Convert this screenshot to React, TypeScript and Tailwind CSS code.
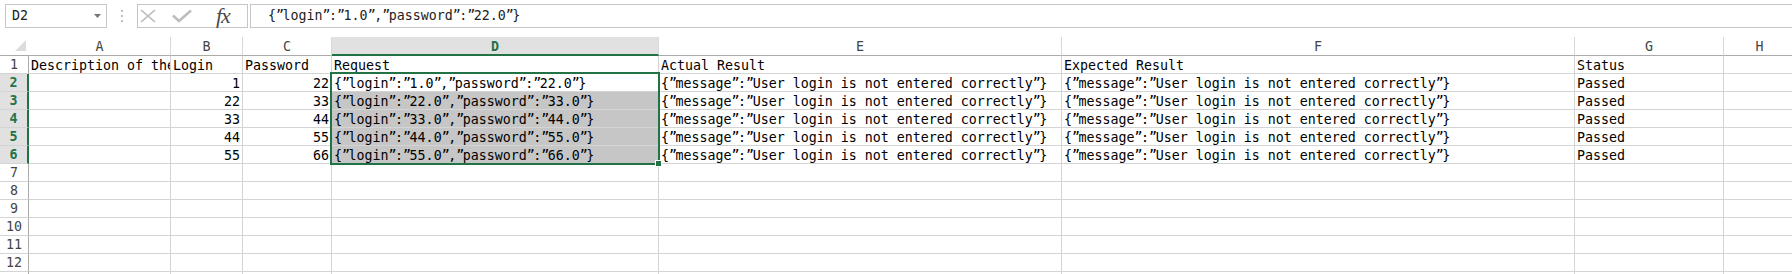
import React, { Fragment } from "react";

const COLW = [
  "w-[142px]",
  "w-[72px]",
  "w-[89px]",
  "w-[327px]",
  "w-[403px]",
  "w-[513px]",
  "w-[149px]",
  "w-[72px]",
];
const LETTERS = ["A", "B", "C", "D", "E", "F", "G", "H"];

function Q({ s }: { s: string }) {
  const parts = s.split("”");
  return (
    <>
      {parts.map((p, i) => (
        <Fragment key={i}>
          {p}
          {i < parts.length - 1 && <span className="tracking-[-1.5px]">”</span>}
        </Fragment>
      ))}
    </>
  );
}

const MSG = "{”message”:”User login is not entered correctly”}";
const DATA = [
  ["", "1", "22", "{”login”:”1.0”,”password”:”22.0”}", MSG, MSG, "Passed", ""],
  ["", "22", "33", "{”login”:”22.0”,”password”:”33.0”}", MSG, MSG, "Passed", ""],
  ["", "33", "44", "{”login”:”33.0”,”password”:”44.0”}", MSG, MSG, "Passed", ""],
  ["", "44", "55", "{”login”:”44.0”,”password”:”55.0”}", MSG, MSG, "Passed", ""],
  ["", "55", "66", "{”login”:”55.0”,”password”:”66.0”}", MSG, MSG, "Passed", ""],
];
const HEAD = ["Description of the test", "Login", "Password", "Request", "Actual Result", "Expected Result", "Status", ""];

function FormulaBar() {
  return (
    <div className="h-[37px] flex items-start pt-[4px] text-[#222]">
      <div className="ml-[5px] w-[102px] h-[24px] shrink-0 border border-[#c6c6c6] flex items-center justify-between pl-[6px] pr-[5px] leading-[22px]">
        <span>D2</span>
        <svg width="7" height="4" viewBox="0 0 7 4">
          <polygon points="0,0 7,0 3.5,4" fill="#777" />
        </svg>
      </div>
      <div className="w-[30px] h-[24px] shrink-0 flex items-center justify-center">
        <svg width="2" height="12" viewBox="0 0 2 12">
          <rect x="0" y="0" width="2" height="2" fill="#bdbdbd" />
          <rect x="0" y="5" width="2" height="2" fill="#bdbdbd" />
          <rect x="0" y="10" width="2" height="2" fill="#bdbdbd" />
        </svg>
      </div>
      <div className="w-[111px] h-[24px] shrink-0 border border-[#c6c6c6] flex items-center pl-[2px]">
        <svg width="16" height="14" viewBox="0 0 16 14" className="shrink-0">
          <path d="M1 1 L15 13 M15 1 L1 13" stroke="#b9b9b9" strokeWidth="1.6" fill="none" />
        </svg>
        <svg width="20" height="14" viewBox="0 0 20 14" className="ml-[16px] shrink-0">
          <path d="M1 6.5 L7 12 L19 1.5" stroke="#bdbdbd" strokeWidth="2.6" fill="none" />
        </svg>
        <span className="ml-[24px] font-['Liberation_Serif',serif] italic text-[22px] leading-[22px] text-[#4a4a4a] tracking-[-1px]">
          fx
        </span>
      </div>
      <div className="ml-[2px] flex-1 h-[24px] border-y border-l border-[#c6c6c6] pl-[17px] leading-[22px] whitespace-nowrap">
        <Q s="{”login”:”1.0”,”password”:”22.0”}" />
      </div>
    </div>
  );
}

function HeaderRow() {
  return (
    <div className="flex h-[19px]">
      <div className="w-[29px] h-[19px] shrink-0 border-b border-[#ababab] flex items-end justify-end pr-[3px] pb-[4px]">
        <svg width="11" height="11" viewBox="0 0 11 11">
          <polygon points="11,0 11,11 0,11" fill="#dcdcdc" />
        </svg>
      </div>
      {LETTERS.map((l, i) => {
        const sel = l === "D";
        return (
          <div
            key={l}
            className={
              COLW[i] +
              " h-[19px] shrink-0 border-r border-[#d8d8d8] text-center pt-[2px] leading-[16px] " +
              (sel
                ? "bg-[#e1e1e1] border-b-2 border-b-[#217346] text-[#217346] font-bold"
                : "border-b border-b-[#ababab] text-[#444]")
            }
          >
            {l}
          </div>
        );
      })}
    </div>
  );
}

function Row({ n, cells }: { n: number; cells: string[] }) {
  const selRow = n >= 2 && n <= 6;
  return (
    <div className="flex h-[18px]">
      <div
        className={
          "w-[29px] h-[18px] shrink-0 border-b border-[#d4d4d4] text-center leading-[18px] " +
          (selRow
            ? "bg-[#e1e1e1] border-r-2 border-r-[#217346] text-[#217346] font-bold"
            : "border-r border-r-[#ababab] text-[#444]")
        }
      >
        {n}
      </div>
      {cells.map((c, i) => {
        const num = /^\d+$/.test(c);
        const shaded = i === 3 && n >= 3 && n <= 6;
        return (
          <div
            key={i}
            className={
              COLW[i] +
              " h-[18px] shrink-0 border-r border-b border-[#d4d4d4] whitespace-nowrap leading-[19px] px-[2px] text-black " +
              (i === 0 ? "overflow-hidden " : "") +
              (num ? "text-right " : "text-left ") +
              (shaded ? "bg-[#c6c6c6]" : "bg-white")
            }
          >
            <Q s={c} />
          </div>
        );
      })}
    </div>
  );
}

export default function App() {
  const rows: string[][] = [HEAD, ...DATA];
  for (let i = 0; i < 7; i++) rows.push(["", "", "", "", "", "", "", ""]);
  return (
    <div className="w-[1792px] h-[274px] overflow-hidden bg-white font-['DejaVu_Sans_Mono',monospace] text-[13.3px]">
      <FormulaBar />
      <div className="relative">
        <HeaderRow />
        {rows.map((r, i) => (
          <Row key={i} n={i + 1} cells={r} />
        ))}
        <div className="absolute left-[330px] top-[35px] w-[330px] h-[93px] border-2 border-[#217346] pointer-events-none" />
        <div className="absolute left-[655px] top-[123px] w-[7px] h-[7px] bg-[#217346] border border-white" />
      </div>
    </div>
  );
}
